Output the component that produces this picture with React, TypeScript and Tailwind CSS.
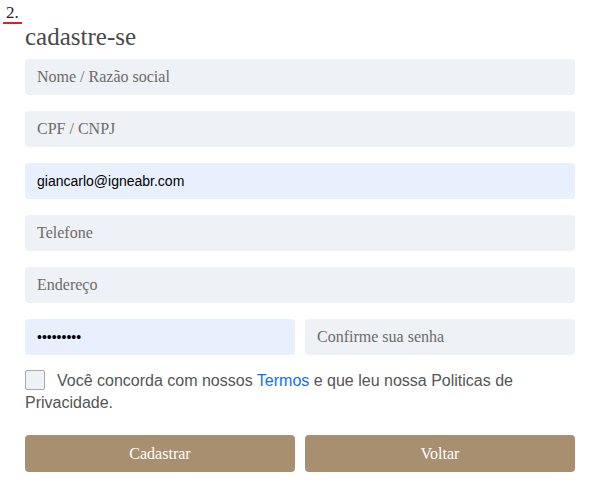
import { useState } from 'react';

const serif = "font-['Liberation_Serif',serif]";
const sans = "font-['Liberation_Sans',Arial,sans-serif]";

function Field({ placeholder, value, type = 'text', filled = false }: { placeholder: string; value?: string; type?: string; filled?: boolean }) {
  return (
    <input
      type={type}
      placeholder={placeholder}
      defaultValue={value}
      className={`h-[36px] w-full rounded-[4px] px-3 outline-none ${
        filled ? `bg-[#e8f0fe] ${sans} text-[14px] text-black` : `bg-[#eef1f5] ${serif} text-[16px] text-[#495057]`
      } placeholder:text-[#6c6c6c]`}
    />
  );
}

export default function App() {
  const [agree, setAgree] = useState(false);

  return (
    <div className="h-[485px] w-full overflow-hidden bg-white">
      {/* step number */}
      <div className={`${serif} h-[24px] pl-[3px] pt-[5px] text-[17px] leading-[16px] text-[#222]`}>
        <span className="inline-block border-b-2 border-[#e02020] px-[3px] pb-[1px]">2.</span>
      </div>

      <div className="pl-[25px] pr-[18px]">
        <h2 className={`${serif} -mt-px mb-[8px] text-[25px] leading-[28px] text-[#4a4a4a]`}>cadastre-se</h2>

        <form className="flex flex-col gap-4" onSubmit={(e) => e.preventDefault()}>
          <Field placeholder="Nome / Razão social" />
          <Field placeholder="CPF / CNPJ" />
          <Field placeholder="E-mail" value="giancarlo@igneabr.com" filled />
          <Field placeholder="Telefone" />
          <Field placeholder="Endereço" />
          <div className="grid grid-cols-2 gap-[10px]">
            <Field placeholder="Senha" type="password" value="123456789" filled />
            <Field placeholder="Confirme sua senha" type="password" />
          </div>

          <label className={`${sans} -mt-px block text-[16px] leading-[22px] text-[#555]`}>
            <span
              onClick={() => setAgree(!agree)}
              className={`mr-[12px] inline-block h-[20px] w-[20px] rounded-[2px] border border-[#aaa] align-top ${agree ? 'bg-[#a78f70]' : 'bg-[#eef1f5]'}`}
            ></span>
            Você concorda com nossos <a className="text-[#0d6efd]">Termos</a> e que leu nossa Politicas de Privacidade.
          </label>

          <div className="mt-[5px] grid grid-cols-2 gap-[10px]">
            <button className={`${serif} h-[37px] rounded-[4px] bg-[#a78f70] text-[16px] text-white`}>Cadastrar</button>
            <button type="button" className={`${serif} h-[37px] rounded-[4px] bg-[#a78f70] text-[16px] text-white`}>Voltar</button>
          </div>
        </form>
      </div>
    </div>
  );
}
